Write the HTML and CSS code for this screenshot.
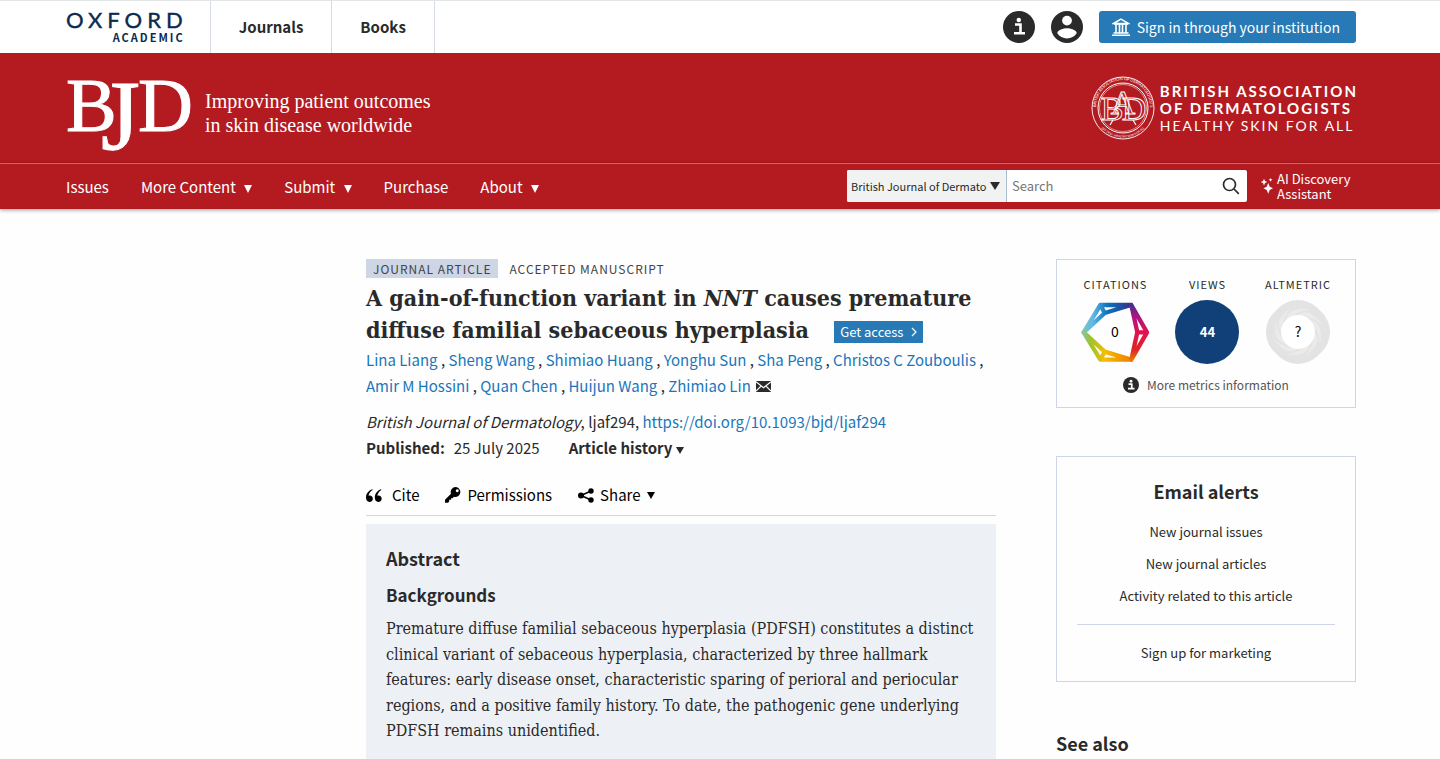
FILE: index.html
```html
<!DOCTYPE html>
<html lang="en">
<head>
	<meta charset="UTF-8">
	<meta name="viewport" content="width=device-width, initial-scale=1">
	<title>British Journal of Dermatology | Oxford Academic</title>
	<link rel="stylesheet" href="styles.css">
</head>
<body>
	<header class="site-header">
		<div class="top-bar wrap">
			<a class="oup-logo" href="#">
				<span class="oup-name">OXFORD</span>
				<span class="oup-sub">ACADEMIC</span>
			</a>
			<nav class="top-nav">
				<a href="#">Journals</a>
				<a href="#">Books</a>
			</nav>
			<div class="top-tools">
				<button class="icon-btn" type="button" aria-label="Information">
					<svg width="32" height="32" viewBox="0 0 32 32"><circle cx="16" cy="16" r="16" fill="#2a2a2a"/><circle cx="15.800" cy="9" r="2.200" fill="#fff"/><path d="M12 13.500h5.500v8M11 22.200h11" fill="none" stroke="#fff" stroke-width="2.600"/></svg>
				</button>
				<button class="icon-btn" type="button" aria-label="Account">
					<svg width="32" height="32" viewBox="0 0 32 32"><circle cx="16" cy="16" r="16" fill="#2a2a2a"/><circle cx="16" cy="9.600" r="4.900" fill="#fff"/><path d="M6.300 22.300c0-3.300 6.500-5 9.700-5s9.700 1.700 9.700 5c-2.100 3.200-5.600 5.200-9.700 5.200s-7.600-2-9.700-5.200z" fill="#fff"/></svg>
				</button>
				<button class="signin-btn" type="button">
					<svg width="18" height="18" viewBox="0 0 18 18" fill="none" stroke="#fff"><path d="M1.500 5.500L9 1l7.500 4.500z" stroke-width="1.500"/><path d="M2 6h14" stroke-width="1.800"/><path d="M4 7v8M7.500 7v8M10.500 7v8M14 7v8" stroke-width="1.600"/><path d="M1.500 15h15M0 17.200h18" stroke-width="1.500"/></svg>
					Sign in through your institution
				</button>
			</div>
		</div>
		<div class="masthead">
			<div class="masthead-inner wrap">
				<a class="bjd-logo" href="#">
					<svg width="126" height="80" viewBox="0 0 126 80">
						<text x="0" y="63">B</text>
						<text class="bjd-j" x="35" y="81">J</text>
						<text x="72" y="63">D</text>
					</svg>
					<span class="bjd-tag">Improving patient outcomes<br>in skin disease worldwide</span>
				</a>
				<a class="bad-logo" href="#">
					<svg width="64" height="64" viewBox="0 0 64 64" fill="none" stroke="#fff">
						<defs>
							<path id="ring-top" d="M6.500 40a27 27 0 1 1 51 0"/>
							<path id="ring-bottom" d="M5 44a29.500 29.500 0 0 0 54 0"/>
						</defs>
						<circle cx="32" cy="32" r="31" stroke-width=".9"/>
						<circle cx="32" cy="32" r="25" stroke-width="1"/>
						<circle cx="32" cy="32" r="23.500" stroke-width=".5"/>
						<text class="seal-ring"><textPath href="#ring-top" startOffset="50%">BRITISH ASSOCIATION OF DERMATOLOGISTS</textPath></text>
						<text class="seal-ring seal-motto"><textPath href="#ring-bottom" startOffset="50%">EST 1920 · HEALTHY SKIN FOR ALL</textPath></text>
						<g class="seal-letter" stroke-width=".9">
							<text x="21" y="44">B</text>
							<text class="seal-a" x="32" y="38">A</text>
							<text x="43" y="44">D</text>
						</g>
						<path d="M22 44l-3 5M42 44l3 5" stroke-width="1.200"/>
					</svg>
					<span class="bad-text">
						<strong>BRITISH ASSOCIATION</strong>
						<strong>OF DERMATOLOGISTS</strong>
						<span>HEALTHY SKIN FOR ALL</span>
					</span>
				</a>
			</div>
		</div>
		<div class="nav-bar">
			<div class="nav-inner wrap">
				<nav class="main-nav">
					<a href="#">Issues</a>
					<a href="#">More Content <i class="caret"></i></a>
					<a href="#">Submit <i class="caret"></i></a>
					<a href="#">Purchase</a>
					<a href="#">About <i class="caret"></i></a>
				</nav>
				<form class="search-form" action="#">
					<div class="search-scope">
						<select aria-label="Search scope">
							<option>British Journal of Dermatology</option>
						</select>
						<i class="caret"></i>
					</div>
					<input type="text" placeholder="Search" aria-label="Search">
					<button type="submit" aria-label="Submit search">
						<svg width="18" height="18" viewBox="0 0 18 18" fill="none" stroke="#2a2a2a" stroke-width="1.700"><circle cx="7.500" cy="7.500" r="6"/><path d="M12 12l4.800 4.800"/></svg>
					</button>
				</form>
				<a class="ai-link" href="#">
					<svg width="12" height="16" viewBox="0 0 12 16" fill="#fff"><path d="M7.200 5l1.500 3.700 3.300 1.600-3.300 1.600-1.500 3.900-1.500-3.900-3.200-1.600 3.200-1.600zM3 .8l1 2.300 2.200 1-2.200 1L3 7.400 2 5.100l-2.200-1 2.200-1zM9.600 0l.6 1.300 1.300.5-1.300.6-.6 1.300-.6-1.300-1.300-.6 1.300-.5z"/></svg>
					<span>AI Discovery<br>Assistant</span>
				</a>
			</div>
		</div>
	</header>

	<main class="page wrap">
		<article class="article">
			<div class="flags">
				<span class="flag flag-type">JOURNAL ARTICLE</span>
				<span class="flag">ACCEPTED MANUSCRIPT</span>
			</div>
			<h1>A gain-of-function variant in <em>NNT</em> causes premature diffuse familial sebaceous hyperplasia
				<a class="access-btn" href="#">Get access <svg width="6" height="10" viewBox="0 0 6 10" fill="none" stroke="#fff" stroke-width="1.200"><path d="M1 1l4 4-4 4"/></svg></a>
			</h1>
			<div class="authors">
				<a href="#">Lina Liang</a> , <a href="#">Sheng Wang</a> , <a href="#">Shimiao Huang</a> , <a href="#">Yonghu Sun</a> , <a href="#">Sha Peng</a> , <a href="#">Christos C Zouboulis</a> , <a href="#">Amir M Hossini</a> , <a href="#">Quan Chen</a> , <a href="#">Huijun Wang</a> , <a href="#">Zhimiao Lin</a>
				<svg class="mail" width="15" height="11" viewBox="0 0 15 11"><path d="M0 0h15v11H0z" fill="#2a2a2a"/><path d="M0 .8l7.500 6L15 .8M0 10.200l5-5M15 10.200l-5-5" fill="none" stroke="#fff" stroke-width="1.200"/></svg>
			</div>
			<div class="citation">
				<div><em>British Journal of Dermatology</em>, ljaf294, <a href="#">https://doi.org/10.1093/bjd/ljaf294</a></div>
				<div class="pub-row">
					<b>Published:</b>
					<span>25 July 2025</span>
					<button type="button">Article history <i class="caret"></i></button>
				</div>
			</div>
			<div class="toolbar">
				<button type="button">
					<svg width="16" height="13" viewBox="0 0 16 13"><path d="M6.300.3C2.500 1.800 0 4.600 0 8.600 0 11.200 1.400 13 3.500 13c2 0 3.400-1.400 3.400-3.300S5.600 6.500 3.700 6.500c-.5 0-.9.100-1.200.2C2.900 4.200 4.400 2.300 6.700 1zM15 .3C11.200 1.800 8.800 4.600 8.800 8.600c0 2.600 1.300 4.400 3.500 4.400 2 0 3.400-1.400 3.400-3.300s-1.300-3.200-3.200-3.200c-.5 0-.9.100-1.200.2.400-2.500 1.900-4.400 4.100-5.700z"/></svg>
					<span class="cite">Cite</span>
				</button>
				<button type="button">
					<svg width="16" height="16" viewBox="0 0 16 16"><path fill-rule="evenodd" d="M10.700 0a5 5 0 1 1-1.700 9.800L7.500 11.200H6v1.600H4.200v1.700L3 15.800H0v-3l6-6A5 5 0 0 1 10.700 0zm1.500 2.300a1.500 1.500 0 1 0 .1 3 1.500 1.500 0 0 0-.1-3z"/></svg>
					Permissions
				</button>
				<button type="button">
					<svg width="16" height="15" viewBox="0 0 16 15"><circle cx="3" cy="7.500" r="3"/><circle cx="13" cy="3" r="2.700"/><circle cx="13" cy="12" r="2.700"/><path d="M13 3L3 7.500l10 4.500" fill="none" stroke="#000" stroke-width="1.500"/></svg>
					Share <i class="caret"></i>
				</button>
			</div>
			<section class="abstract">
				<h2>Abstract</h2>
				<h3>Backgrounds</h3>
				<p>Premature diffuse familial sebaceous hyperplasia (PDFSH) constitutes a distinct clinical variant of sebaceous hyperplasia, characterized by three hallmark features: early disease onset, characteristic sparing of perioral and periocular regions, and a positive family history. To date, the pathogenic gene underlying PDFSH remains unidentified.</p>
			</section>
		</article>

		<aside class="sidebar">
			<section class="box metrics">
				<div class="metric-row">
					<div class="metric">
						<span>CITATIONS</span>
						<svg width="69" height="64" viewBox="92 134 207 192">
							<defs>
								<linearGradient id="g-blue" gradientUnits="userSpaceOnUse" x1="98" y1="0" x2="244" y2="0"><stop offset="0" stop-color="#7cc5c0"/><stop offset=".2" stop-color="#62b8e6"/><stop offset=".5" stop-color="#0a74bd"/><stop offset="1" stop-color="#33308c"/></linearGradient>
								<linearGradient id="g-red" gradientUnits="userSpaceOnUse" x1="0" y1="147" x2="0" y2="316"><stop offset="0" stop-color="#46308c"/><stop offset=".25" stop-color="#b5127f"/><stop offset=".5" stop-color="#e3104f"/><stop offset=".8" stop-color="#dc2526"/><stop offset="1" stop-color="#ee7d00"/></linearGradient>
								<linearGradient id="g-green" gradientUnits="userSpaceOnUse" x1="98" y1="0" x2="244" y2="0"><stop offset="0" stop-color="#8cc3a0"/><stop offset=".15" stop-color="#9bc32c"/><stop offset=".45" stop-color="#f7bd00"/><stop offset="1" stop-color="#ee7d00"/></linearGradient>
							</defs>
							<g fill="none" stroke-width="13" stroke-linejoin="round">
								<path d="M100 231l50-82h92l-79 24zM150 149l13 24" stroke="url(#g-blue)"/>
								<path d="M100 231l50 82h92l-79-24zM150 313l13-24" stroke="url(#g-green)"/>
								<path d="M243 149l47 82-47 82 18-82zM261 231h29" stroke="url(#g-red)"/>
							</g>
							<text class="big-num" x="194" y="245">0</text>
						</svg>
					</div>
					<div class="metric">
						<span>VIEWS</span>
						<div class="views">44</div>
					</div>
					<div class="metric">
						<span>ALTMETRIC</span>
						<svg width="64" height="64" viewBox="0 0 64 64">
							<g fill="#e3e3e3">
								<circle cx="32" cy="28" r="28"/><circle cx="36" cy="32" r="28"/><circle cx="32" cy="36" r="28"/><circle cx="28" cy="32" r="28"/><circle cx="32" cy="32" r="30"/>
							</g>
							<g fill="#fff" fill-opacity=".3">
								<path id="petal" d="M32 15q12-8 24 10-8-8-24-10"/>
								<use href="#petal" transform="rotate(45 32 32)"/><use href="#petal" transform="rotate(90 32 32)"/><use href="#petal" transform="rotate(135 32 32)"/><use href="#petal" transform="rotate(180 32 32)"/><use href="#petal" transform="rotate(225 32 32)"/><use href="#petal" transform="rotate(270 32 32)"/><use href="#petal" transform="rotate(315 32 32)"/>
							</g>
							<circle cx="32" cy="32" r="17" fill="#fff"/>
							<text class="small-num" x="32" y="37">?</text>
						</svg>
					</div>
				</div>
				<a class="more-metrics" href="#">
					<svg width="16" height="16" viewBox="0 0 32 32"><circle cx="16" cy="16" r="16" fill="#2a2a2a"/><circle cx="16" cy="8.500" r="2.800" fill="#fff"/><path d="M11 14h6.500v8M10 23h13" fill="none" stroke="#fff" stroke-width="3.500"/></svg>
					More metrics information
				</a>
			</section>
			<section class="box alerts">
				<h2>Email alerts</h2>
				<ul>
					<li><a href="#">New journal issues</a></li>
					<li><a href="#">New journal articles</a></li>
					<li><a href="#">Activity related to this article</a></li>
				</ul>
				<a class="marketing" href="#">Sign up for marketing</a>
			</section>
			<h2 class="see-also">See also</h2>
		</aside>
	</main>
</body>
</html>
```
FILE: styles.css
```css
/* reset */
* {
	margin: 0;
	padding: 0;
	box-sizing: border-box;
}
body {
	display: flex;
	flex-direction: column;
	min-height: 100vh;
	font-family: "Noto Sans CJK SC", "Open Sans", sans-serif;
	font-size: 15px;
	line-height: 26px;
	color: #2a2a2a;
	background: #fefefe;
}
a {
	color: #1a76bb;
	text-decoration: none;
}
button {
	border: none;
	background: none;
	font: inherit;
	color: inherit;
	cursor: pointer;
}
svg {
	display: block;
	flex: none;
}
.wrap {
	padding: 0 84px 0 66px;
}
.caret {
	display: inline-block;
	border: 4px solid transparent;
	border-top: 7px solid currentColor;
	border-bottom: none;
}

/* top bar */
.top-bar {
	display: flex;
	height: 53px;
	border-top: 1px solid #e2e6e6;
	background: #fff;
}
.oup-logo {
	display: flex;
	flex-direction: column;
	align-items: flex-end;
	padding: 8px 27px 0 0;
	color: #0b2a50;
}
.oup-name {
	margin-right: -5px;
	font-family: Lato, sans-serif;
	font-size: 22px;
	line-height: 22px;
	letter-spacing: 5px;
	-webkit-text-stroke: .4px currentColor;
}
.oup-sub {
	margin-right: -2px;
	font-size: 11px;
	font-weight: bold;
	line-height: 12px;
	letter-spacing: 2px;
}
.top-nav {
	display: flex;
	border-left: 1px solid #d5d9e8;
}
.top-nav a {
	padding: 0 28px;
	border-right: 1px solid #d5d9e8;
	font-weight: bold;
	line-height: 52px;
	color: #2a2a2a;
}
.top-tools {
	display: flex;
	align-items: center;
	gap: 16px;
	margin-left: auto;
}
.signin-btn {
	display: flex;
	align-items: center;
	gap: 7px;
	height: 32px;
	padding: 0 16px 0 13px;
	border-radius: 3px;
	font-size: 14px;
	color: #fff;
	background: #277ab5;
}

/* journal masthead */
.masthead {
	height: 110px;
	background: #b41b21;
}
.masthead-inner {
	display: flex;
	justify-content: space-between;
	height: 100%;
}
.masthead a {
	display: flex;
	align-items: center;
	color: #fff;
}
.masthead .bjd-logo {
	gap: 13px;
	font-family: "Liberation Serif", serif;
}
.bjd-logo svg {
	font-size: 76px;
	fill: #fff;
	stroke: #fff;
	stroke-width: 1px;
	overflow: visible;
}
.bjd-j {
	font-size: 100px;
}
.bjd-tag {
	padding-top: 9px;
	font-size: 20px;
	line-height: 24px;
}
.masthead .bad-logo {
	gap: 5px;
}
.bad-logo svg {
	overflow: visible;
}
.seal-ring {
	font: 4px Lato, sans-serif;
	fill: #fff;
	stroke: none;
	text-anchor: middle;
}
.seal-motto {
	font-size: 3px;
}
.seal-letter {
	font: 34px "Liberation Serif", serif;
	text-anchor: middle;
}
.bad-text {
	display: flex;
	flex-direction: column;
	margin-right: -2px;
	font: 14px/17px Lato, sans-serif;
	letter-spacing: 2px;
}
.bad-text strong {
	font-size: 15px;
	font-weight: bold;
}

/* main navigation */
.nav-bar {
	border-top: 1px solid #e8585e;
	background: #b41b21;
	box-shadow: 0 1px 4px rgba(0, 0, 0, .4);
}
.nav-inner {
	display: flex;
	align-items: center;
	height: 45px;
}
.main-nav {
	display: flex;
	gap: 32px;
}
.main-nav a {
	line-height: 45px;
	color: #fff;
}
.main-nav .caret {
	margin-left: 5px;
	border-top-width: 8px;
}
.search-form {
	display: flex;
	width: 400px;
	height: 32px;
	margin: 0 0 2px auto;
	border-radius: 2px;
	background: #fff;
	overflow: hidden;
}
.search-scope {
	position: relative;
	width: 160px;
	border-right: 1px solid #a9bccb;
	background: #f1f3f3;
}
.search-scope select {
	width: 140px;
	height: 32px;
	padding-left: 4px;
	border: none;
	appearance: none;
	font: 11px/32px "Noto Sans CJK SC", "Open Sans", sans-serif;
	color: #2a2a2a;
	background: none;
}
.search-scope .caret {
	position: absolute;
	top: 12px;
	right: 6px;
	border-width: 8px 5px 0;
	pointer-events: none;
}
.search-form input {
	flex: 1;
	min-width: 0;
	padding-left: 5px;
	border: none;
	outline: none;
	font: 13px "Noto Sans CJK SC", "Open Sans", sans-serif;
}
.search-form input::placeholder {
	color: #757575;
}
.search-form button {
	padding: 0 7px;
}
.ai-link {
	display: flex;
	align-items: center;
	gap: 4px;
	width: 109px;
	padding: 0 0 2px 14px;
	font-size: 13px;
	line-height: 15px;
	color: #fff;
	white-space: nowrap;
}

/* page */
.page {
	display: grid;
	flex: 1;
	grid-template-columns: 240px minmax(0, 1fr) 300px;
	gap: 60px;
	padding-top: 50px;
}
.article {
	display: flex;
	flex-direction: column;
	grid-column: 2;
}
.flags {
	display: flex;
	gap: 4px;
}
.flag {
	padding: 0 7px;
	font-size: 12px;
	line-height: 19px;
	letter-spacing: 1px;
	color: #444;
}
.flag-type {
	background: #ced5e4;
}
h1 {
	margin: 4px 0 1px;
	font-family: "DejaVu Serif Condensed", "DejaVu Serif", serif;
	font-size: 23px;
	line-height: 32px;
}
.access-btn {
	display: inline-flex;
	align-items: center;
	gap: 8px;
	height: 22px;
	margin-left: 18px;
	padding: 0 6px;
	font: 13px/22px "Noto Sans CJK SC", "Open Sans", sans-serif;
	color: #fff;
	background: #277ab5;
	vertical-align: middle;
}
.mail {
	display: inline-block;
	margin-left: 2px;
}
.citation {
	margin-top: 10px;
}
.pub-row {
	display: flex;
	gap: 9px;
}
.pub-row button {
	margin-left: 20px;
	font-weight: bold;
}
.toolbar {
	display: flex;
	gap: 26px;
	margin-top: 21px;
	padding-bottom: 7px;
	border-bottom: 1px solid #ced5e4;
	color: #000;
}
.toolbar button {
	display: flex;
	align-items: center;
	gap: 6px;
}
.cite {
	padding-left: 4px;
}
.abstract {
	flex: 1;
	margin-top: 8px;
	padding: 21px 20px 12px;
	background: #edf1f6;
}
h2, h3 {
	font-size: 18px;
	line-height: 26px;
}
h3 {
	margin-top: 11px;
	font-size: 17px;
}
.abstract p {
	margin-top: 8px;
	font-family: "DejaVu Serif Condensed", "DejaVu Serif", serif;
	font-size: 16px;
	line-height: 1.6;
}

/* sidebar */
.box {
	border: 1px solid #ced5e4;
	text-align: center;
}
.metrics {
	padding: 13px 24px 11px;
	font-size: 12px;
	line-height: 22px;
}
.metric-row {
	display: flex;
	justify-content: space-between;
}
.metric {
	display: flex;
	flex-direction: column;
	align-items: center;
	gap: 5px;
}
.metric span {
	font-size: 11px;
	letter-spacing: 1px;
}
.views {
	width: 64px;
	height: 64px;
	border-radius: 50%;
	font-size: 13px;
	font-weight: bold;
	line-height: 64px;
	color: #fff;
	background: #113f77;
}
.big-num {
	font-size: 42px;
	text-anchor: middle;
}
.small-num {
	font-size: 14px;
	text-anchor: middle;
}
.more-metrics {
	display: flex;
	align-items: center;
	justify-content: center;
	gap: 8px;
	margin-top: 10px;
	color: #555;
}
.alerts {
	margin-top: 48px;
	padding: 21px 20px 15px;
	font-size: 13px;
	line-height: 26px;
}
.alerts ul {
	margin-top: 12px;
	padding-bottom: 12px;
	border-bottom: 1px solid #ced5e4;
	list-style: none;
	line-height: 32px;
}
.alerts a {
	color: #2a2a2a;
}
.marketing {
	display: block;
	margin-top: 15px;
}
.see-also {
	margin-top: 48px;
}
```
